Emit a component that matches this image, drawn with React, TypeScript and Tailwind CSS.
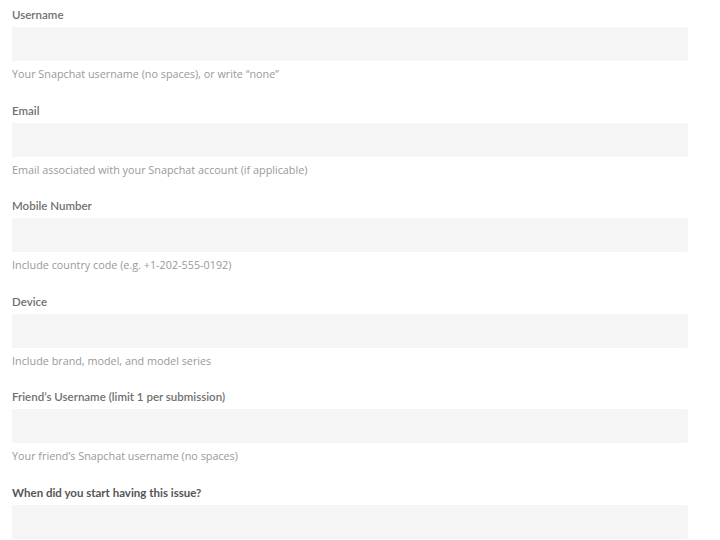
import React from "react";

const fields: { label: string; help?: string; bold?: boolean }[] = [
  { label: "Username", help: "Your Snapchat username (no spaces), or write \u201cnone\u201d" },
  { label: "Email", help: "Email associated with your Snapchat account (if applicable)" },
  { label: "Mobile Number", help: "Include country code (e.g. +1-202-555-0192)" },
  { label: "Device", help: "Include brand, model, and model series" },
  { label: "Friend\u2019s Username (limit 1 per submission)", help: "Your friend\u2019s Snapchat username (no spaces)" },
  { label: "When did you start having this issue?", bold: true },
];

export default function App() {
  return (
    <div
      className="w-[720px] h-[540px] overflow-hidden bg-white pl-[12px] pt-[8px] flex flex-col gap-[22.6px]"
      style={{ fontFamily: "Lato, 'Open Sans', sans-serif" }}
    >
      {fields.map((f) => (
        <div key={f.label} className="flex flex-col">
          <div
            className={
              f.bold
                ? "h-[14px] leading-[14px] text-[11.5px] font-bold text-[#555555]"
                : "h-[14px] leading-[14px] text-[11.5px] font-semibold text-[#707070]"
            }
          >
            {f.label}
          </div>
          <div className="mt-[5px] h-[34px] w-[676px] bg-[#f5f5f5] rounded-[2px]" />
          {f.help && (
            <div
              className="mt-[6px] h-[14px] leading-[14px] text-[10.8px] text-[#999999]"
              style={{ fontFamily: "'Open Sans', Lato, sans-serif" }}
            >
              {f.help}
            </div>
          )}
        </div>
      ))}
    </div>
  );
}
